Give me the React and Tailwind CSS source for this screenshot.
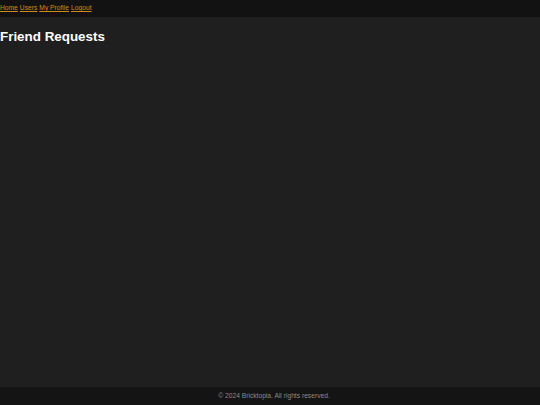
import React from 'react';

const links = ['Home', 'Users', 'My Profile', 'Logout'];

const App = () => {
  return (
    <div className="min-h-screen flex flex-col bg-[#1f1f1f] text-white font-['Liberation_Sans',Arial,sans-serif]">
      <header className="h-[17px] bg-[#121212] flex items-start pt-[4px]">
        <nav className="flex gap-[2px] text-[6.7px] leading-[8px]">
          {links.map((l) => (
            <a key={l} href="#" className="text-[#d08a1c] underline">{l}</a>
          ))}
        </nav>
      </header>
      <main className="flex-grow">
        <h1 className="text-[13.4px] font-bold leading-none mt-[13px]">Friend Requests</h1>
      </main>
      <footer className="h-[18px] bg-[#141414] flex items-center justify-center pl-[8px]">
        <p className="text-[6.7px] text-[#8a8a8a]">© 2024 Bricktopia. All rights reserved.</p>
      </footer>
    </div>
  );
};

export default App;
